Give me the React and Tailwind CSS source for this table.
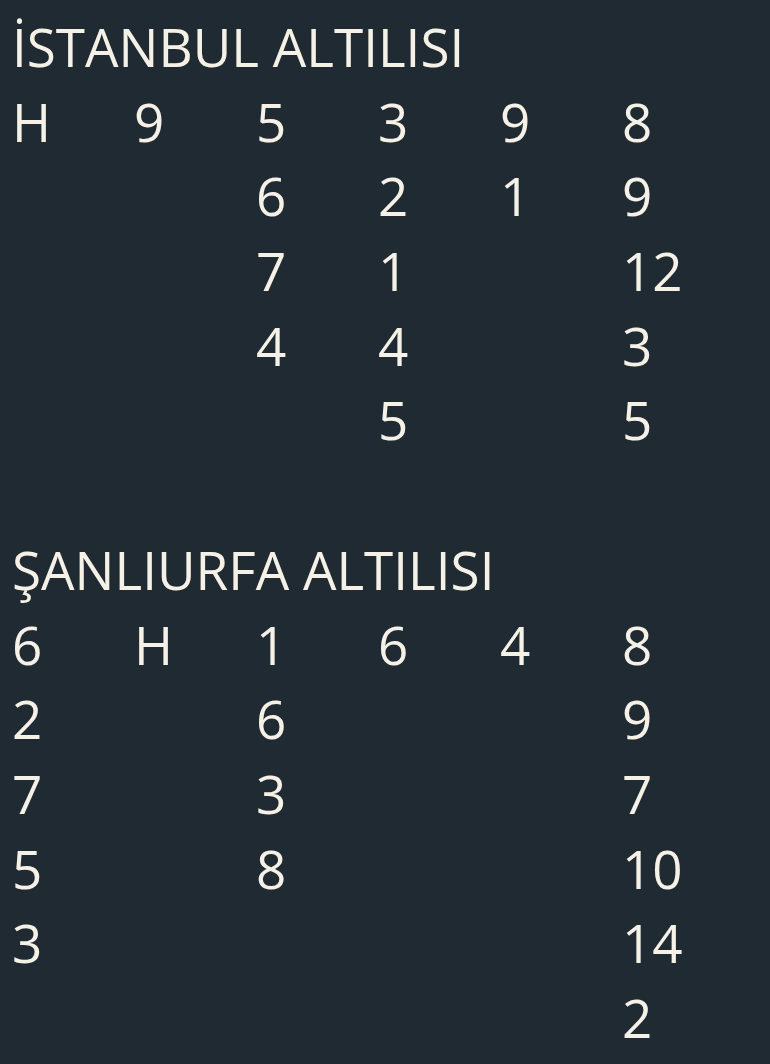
import React from 'react';

const races = [
  {
    title: 'İSTANBUL ALTILISI',
    rows: [
      ['H', '9', '5', '3', '9', '8'],
      ['', '', '6', '2', '1', '9'],
      ['', '', '7', '1', '', '12'],
      ['', '', '4', '4', '', '3'],
      ['', '', '', '5', '', '5'],
    ],
  },
  {
    title: 'ŞANLIURFA ALTILISI',
    rows: [
      ['6', 'H', '1', '6', '4', '8'],
      ['2', '', '6', '', '', '9'],
      ['7', '', '3', '', '', '7'],
      ['5', '', '8', '', '', '10'],
      ['3', '', '', '', '', '14'],
      ['', '', '', '', '', '2'],
    ],
  },
];

const App = () => {
  return (
    <div
      className="w-[770px] h-[1064px] bg-[#202a33] text-[#f5f1e6] pt-[10px] pl-[12px] text-[53px] leading-[74.7px] overflow-hidden"
      style={{ fontFamily: '"Open Sans", "Noto Sans", sans-serif' }}
    >
      {races.map((race, i) => (
        <div key={race.title} className={i > 0 ? 'mt-[74.7px]' : ''}>
          <div>{race.title}</div>
          {race.rows.map((row, r) => (
            <div key={r} className="grid grid-cols-[repeat(6,122px)] h-[74.7px]">
              {row.map((cell, c) => (
                <span key={c}>{cell}</span>
              ))}
            </div>
          ))}
        </div>
      ))}
    </div>
  );
};

export default App;
